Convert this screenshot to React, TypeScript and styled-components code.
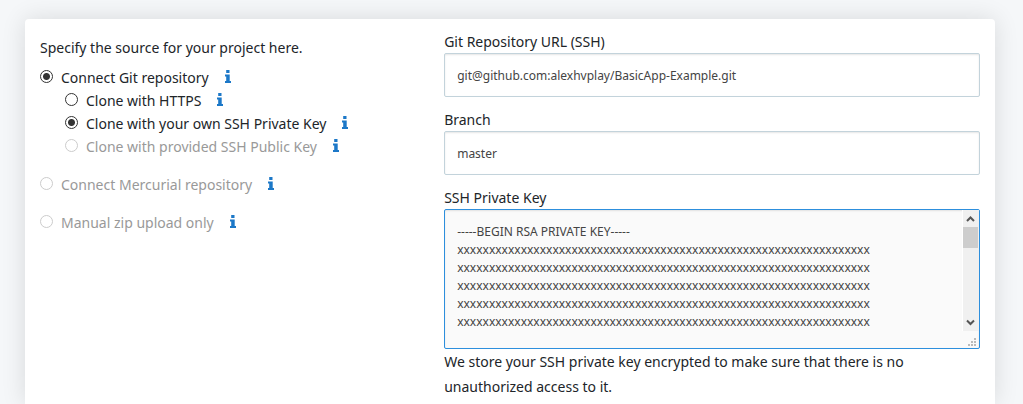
import React, { useId } from 'react';
import styled, { createGlobalStyle } from 'styled-components';

const GlobalStyle = createGlobalStyle`
  *, *::before, *::after { box-sizing: border-box; }
  body {
    margin: 0;
    background: #f5f7f9;
    color: #212529;
    font-family: "Noto Sans", "Open Sans", sans-serif;
    font-size: 14px;
    line-height: 23px;
  }
`;

const Page = styled.div`
  display: flex;
  min-height: 100vh;
  padding: 19px 28px 0 25px;
  overflow: hidden;
`;

const Card = styled.form`
  flex: 1;
  display: grid;
  grid-template-columns: 5fr 7fr;
  background: #fff;
  border-radius: 4px 4px 0 0;
  box-shadow: 0 0 25px rgba(0, 0, 0, 0.12);
`;

const SourceColumn = styled.fieldset`
  min-width: 0;
  margin: 0;
  border: 0;
  padding: 17px 15px 0;
`;

const Intro = styled.legend`
  float: left;
  width: 100%;
  padding: 0;
  margin-bottom: 7px;
`;

const OptionList = styled.div<{ $gap: number; $indent?: number }>`
  clear: both;
  display: flex;
  flex-direction: column;
  gap: ${(p) => p.$gap}px;
  padding-left: ${(p) => p.$indent ?? 0}px;
`;

const OptionRow = styled.div`
  display: flex;
  align-items: center;
  height: 23px;
`;

const Radio = styled.input`
  appearance: none;
  flex: none;
  width: 13px;
  height: 13px;
  margin: 0 8px 2px 0;
  border: 1px solid #333;
  border-radius: 50%;
  background: #fff;
  &:checked {
    background: radial-gradient(circle, #333 3px, #fff 4px);
  }
  &:disabled {
    border-color: #ccc;
  }
`;

const OptionLabel = styled.label<{ $disabled?: boolean }>`
  color: ${(p) => (p.$disabled ? '#999' : 'inherit')};
  white-space: nowrap;
`;

const InfoButton = styled.button`
  display: flex;
  margin: 0 0 2px 16px;
  padding: 0;
  border: 0;
  background: none;
  color: #1c78c8;
`;

const FieldsColumn = styled.div`
  min-width: 0;
  padding: 12px 15px 0;
`;

const Field = styled.div`
  display: flex;
  flex-direction: column;
  margin-bottom: 12px;
`;

const FieldLabel = styled.label`
  display: block;
  line-height: 22px;
`;

const TextInput = styled.input`
  width: 100%;
  height: 44px;
  padding: 0 12px;
  border: 1px solid #c3d3db;
  border-radius: 2px;
  background: #fff;
  box-shadow: inset 0 1px 2px rgba(0, 0, 0, 0.1);
  color: #444;
  font: 12px/18px "Noto Sans", "Open Sans", sans-serif;
  outline: none;
`;

const KeyBox = styled.div`
  position: relative;
  display: flex;
`;

const KeyArea = styled.textarea`
  width: 100%;
  height: 140px;
  padding: 13px 30px 13px 12px;
  border: 1px solid #2d8fdd;
  border-radius: 2px;
  background: #fafafa;
  box-shadow: inset 0 1px 2px rgba(0, 0, 0, 0.1);
  color: #444;
  font: 12px/18px "Noto Sans", "Open Sans", sans-serif;
  outline: none;
  resize: none;
  overflow: hidden;
  white-space: pre;
`;

const ScrollBar = styled.div`
  position: absolute;
  top: 1px;
  right: 1px;
  bottom: 18px;
  width: 17px;
  display: flex;
  flex-direction: column;
  justify-content: space-between;
  background: #f0f0f0;
  border-left: 1px solid #fff;
`;

const ScrollThumb = styled.div`
  width: 15px;
  height: 21px;
  margin-bottom: auto;
  background: #cdcdcd;
`;

const ResizeGrip = styled.svg`
  position: absolute;
  right: 4px;
  bottom: 3px;
`;

const Help = styled.p`
  margin: 0;
  max-width: 480px;
  line-height: 25px;
`;

function InfoIcon() {
  return (
    <svg width="6" height="13" viewBox="0 0 6 13" fill="currentColor" aria-hidden="true">
      <path d="M1.2 0h3.3v3H1.2zM0 4.5h4.7V11H6v2H0v-2h1.2V6.5H0z" />
    </svg>
  );
}

type OptionProps = { group: string; label: string; checked?: boolean; disabled?: boolean };

function Option({ group, label, checked, disabled }: OptionProps) {
  const id = useId();
  return (
    <OptionRow>
      <Radio type="radio" id={id} name={group} defaultChecked={checked} disabled={disabled} />
      <OptionLabel htmlFor={id} $disabled={disabled}>{label}</OptionLabel>
      <InfoButton type="button" aria-label={`About: ${label}`}><InfoIcon /></InfoButton>
    </OptionRow>
  );
}

function ScrollArrow({ down }: { down?: boolean }) {
  return (
    <svg width="15" height="17" viewBox="0 0 15 17" fill="none" stroke="#555" strokeWidth="2" aria-hidden="true">
      <path d={down ? 'M4 6.5l3.5 3.5 3.5-3.5' : 'M4 11l3.5-3.5 3.5 3.5'} />
    </svg>
  );
}

const keyText = ['-----BEGIN RSA PRIVATE KEY-----', ...Array(5).fill('x'.repeat(65))].join('\n');

export default function App() {
  return (
    <>
      <GlobalStyle />
      <Page>
        <Card>
          <SourceColumn>
            <Intro>Specify the source for your project here.</Intro>
            <OptionList $gap={15}>
              <div>
                <Option group="source" label="Connect Git repository" checked />
                <OptionList $gap={0} $indent={25}>
                  <Option group="clone" label="Clone with HTTPS" />
                  <Option group="clone" label="Clone with your own SSH Private Key" checked />
                  <Option group="clone" label="Clone with provided SSH Public Key" disabled />
                </OptionList>
              </div>
              <Option group="source" label="Connect Mercurial repository" disabled />
              <Option group="source" label="Manual zip upload only" disabled />
            </OptionList>
          </SourceColumn>
          <FieldsColumn>
            <Field>
              <FieldLabel htmlFor="url">Git Repository URL (SSH)</FieldLabel>
              <TextInput id="url" defaultValue="git@github.com:alexhvplay/BasicApp-Example.git" />
            </Field>
            <Field>
              <FieldLabel htmlFor="branch">Branch</FieldLabel>
              <TextInput id="branch" defaultValue="master" />
            </Field>
            <FieldLabel htmlFor="key">SSH Private Key</FieldLabel>
            <KeyBox>
              <KeyArea id="key" defaultValue={keyText} spellCheck={false} />
              <ScrollBar aria-hidden="true">
                <ScrollArrow />
                <ScrollThumb />
                <ScrollArrow down />
              </ScrollBar>
              <ResizeGrip width="8" height="8" viewBox="0 0 8 8" fill="#bbb" aria-hidden="true">
                <path d="M6 0h2v2H6zM3 3h2v2H3zM6 3h2v2H6zM0 6h2v2H0zM3 6h2v2H3zM6 6h2v2H6z" />
              </ResizeGrip>
            </KeyBox>
            <Help>
              We store your SSH private key encrypted to make sure that there is no unauthorized access to it.
            </Help>
          </FieldsColumn>
        </Card>
      </Page>
    </>
  );
}
